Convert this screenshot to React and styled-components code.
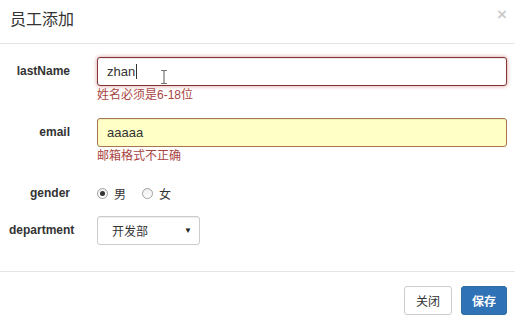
import styled, { createGlobalStyle } from 'styled-components';

const GlobalStyle = createGlobalStyle`
  html, body {
    margin: 0;
    padding: 0;
    background: #ffffff;
  }
  body {
    font-family: 'Liberation Sans', 'Noto Sans CJK SC', sans-serif;
    color: #333333;
  }
`;

const Modal = styled.div`
  width: 515px;
  height: 323px;
  background: #ffffff;
  display: flex;
  flex-direction: column;
  overflow: hidden;
`;

const Header = styled.div`
  height: 43px;
  border-bottom: 1px solid #e5e5e5;
  display: flex;
  align-items: center;
  justify-content: space-between;
  padding: 0 8px 0 10px;
  box-sizing: content-box;
`;

const Title = styled.h4`
  margin: 0;
  font-size: 16px;
  font-weight: normal;
  color: #333333;
  line-height: 20px;
  margin-top: -4px;
  font-family: 'Liberation Sans', 'Noto Sans CJK SC', sans-serif;
`;

const Close = styled.span`
  font-family: 'Liberation Sans', sans-serif;
  font-size: 17px;
  font-weight: bold;
  color: #000;
  opacity: 0.2;
  line-height: 1;
  margin-top: -14px;
`;

const Body = styled.div`
  padding: 13px 0 26px 0;
  display: flex;
  flex-direction: column;
`;

const FormGroup = styled.div`
  display: flex;
  align-items: flex-start;
  margin-top: ${p => p.$top || 0}px;
`;

const Label = styled.label`
  width: 61px;
  margin-left: 9px;
  margin-right: 27px;
  flex-shrink: 0;
  text-align: right;
  white-space: nowrap;
  font-size: 12px;
  font-weight: bold;
  color: #333333;
  line-height: ${p => p.$lh || 29}px;
`;

const Control = styled.div`
  flex: 1;
  padding-right: 8px;
  display: flex;
  flex-direction: column;
  align-items: flex-start;
`;

const Input = styled.div`
  position: relative;
  width: 100%;
  height: 29px;
  box-sizing: border-box;
  border: 1px solid ${p => p.$border};
  border-radius: 3px;
  background: ${p => p.$bg || '#ffffff'};
  box-shadow: ${p => p.$focus
    ? 'inset 0 1px 1px rgba(0,0,0,.075), 0 0 4px #d79a99'
    : 'inset 0 1px 1px rgba(0,0,0,.075)'};
  padding: 0 9px;
  display: flex;
  align-items: center;
  font-size: 13px;
  color: #333333;
`;

const Caret = styled.span`
  display: inline-block;
  width: 1px;
  height: 15px;
  background: #333333;
  margin-left: 1px;
`;

const IBeam = styled.svg`
  position: absolute;
  left: 62px;
  top: 12px;
`;

const Help = styled.span`
  margin-top: 2px;
  font-size: 12px;
  line-height: 14px;
  color: #a94442;
`;

const RadioRow = styled.div`
  display: flex;
  align-items: center;
  height: 20px;
  font-size: 12px;
  color: #333333;
`;

const RadioItem = styled.span`
  display: inline-flex;
  align-items: center;
  margin-right: 16px;
`;

const RadioDot = styled.span`
  width: 9px;
  height: 9px;
  border-radius: 50%;
  border: 1px solid #a0a0a0;
  background: linear-gradient(#eeeeee, #ffffff);
  display: inline-flex;
  align-items: center;
  justify-content: center;
  margin-right: 6px;
  &::after {
    content: '';
    width: 5px;
    height: 5px;
    border-radius: 50%;
    background: ${p => (p.$checked ? '#333333' : 'transparent')};
  }
`;

const Select = styled.div`
  width: 103px;
  height: 29px;
  box-sizing: border-box;
  border: 1px solid #cccccc;
  border-radius: 3px;
  box-shadow: inset 0 1px 1px rgba(0,0,0,.075);
  display: flex;
  align-items: center;
  justify-content: space-between;
  padding: 0 7px 0 14px;
  font-size: 12px;
  color: #333333;
`;

const Arrow = styled.span`
  font-size: 8px;
  color: #222222;
`;

const Footer = styled.div`
  border-top: 1px solid #e5e5e5;
  display: flex;
  justify-content: flex-end;
  gap: 9px;
  padding: 14px 8px 0 0;
`;

const Button = styled.button`
  height: 29px;
  padding: 0 ${p => (p.$primary ? 10 : 11)}px;
  border-radius: 3px;
  font-size: 12px;
  font-family: 'Liberation Sans', 'Noto Sans CJK SC', sans-serif;
  font-weight: ${p => (p.$primary ? 'bold' : 'normal')};
  border: 1px solid ${p => (p.$primary ? '#2e6da4' : '#cccccc')};
  background: ${p => (p.$primary ? '#2f72b5' : '#ffffff')};
  color: ${p => (p.$primary ? '#ffffff' : '#333333')};
`;

export default function App() {
  return (
    <>
      <GlobalStyle />
      <Modal>
        <Header>
          <Title>员工添加</Title>
          <Close>×</Close>
        </Header>
        <Body>
          <FormGroup>
            <Label>lastName</Label>
            <Control>
              <Input $border="#843534" $focus>
                zhan<Caret />
                <IBeam width="8" height="14" viewBox="0 0 8 14">
                  <path d="M1 0.5h2.5l0.5 0.6 0.5-0.6H7M4 1.2v11.6M1 13.5h2.5l0.5-0.6 0.5 0.6H7" stroke="#777" strokeWidth="1.2" fill="none" />
                </IBeam>
              </Input>
              <Help>姓名必须是6-18位</Help>
            </Control>
          </FormGroup>
          <FormGroup $top={16}>
            <Label>email</Label>
            <Control>
              <Input $border="#a5764f" $bg="#ffffc6">aaaaa</Input>
              <Help>邮箱格式不正确</Help>
            </Control>
          </FormGroup>
          <FormGroup $top={20}>
            <Label $lh={20}>gender</Label>
            <Control>
              <RadioRow>
                <RadioItem><RadioDot $checked />男</RadioItem>
                <RadioItem><RadioDot />女</RadioItem>
              </RadioRow>
            </Control>
          </FormGroup>
          <FormGroup $top={13}>
            <Label>department</Label>
            <Control>
              <Select>
                开发部
                <Arrow>▼</Arrow>
              </Select>
            </Control>
          </FormGroup>
        </Body>
        <Footer>
          <Button>关闭</Button>
          <Button $primary>保存</Button>
        </Footer>
      </Modal>
    </>
  );
}
